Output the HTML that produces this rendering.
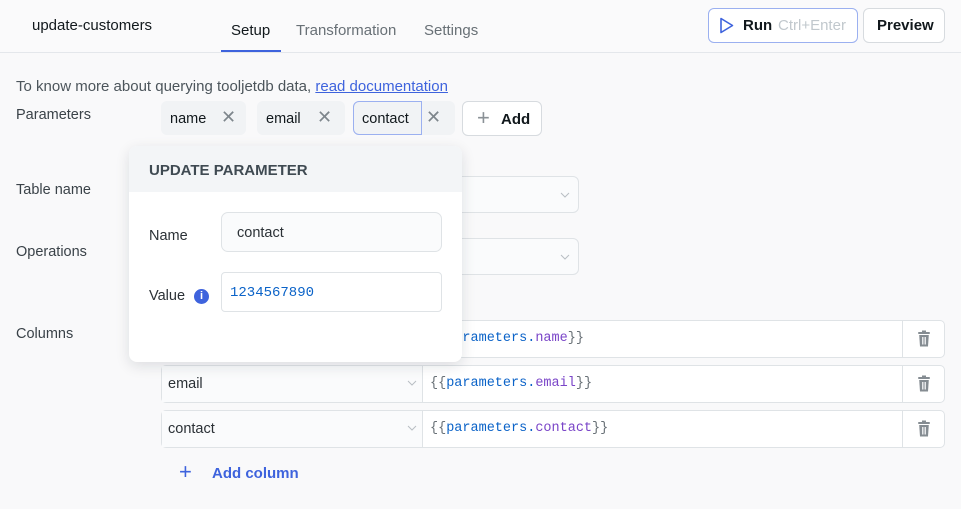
<!DOCTYPE html>
<html><head><style>
*{box-sizing:border-box;margin:0;padding:0}
body{width:961px;height:509px;background:#f9f9fa;font-family:"Liberation Sans",sans-serif;position:relative;overflow:hidden;color:#11181c}
.a{position:absolute}
.hdr{left:0;top:0;width:961px;height:53px;border-bottom:1px solid #e4e7eb;background:#fafafb}
.tab{font-size:15px;color:#687076;top:22px}
.btn{border:1px solid #d7dbdf;border-radius:6px;background:#fff}
.lbl{font-size:14.5px;color:#3a4248;left:16px}
.chip{top:101px;height:34px;background:#f1f3f5;border-radius:6px;font-size:14.5px}
.x{color:#7e868c;font-size:18px}
.sel{border:1px solid #dfe3e6;border-radius:6px;background:#fafbfc}
.row{left:161px;width:784px;height:38px;border:1px solid #dfe3e6;border-radius:5px;background:#fff}
.row .l{position:absolute;left:0;top:0;width:261px;height:36px;background:#fafbfc;border-right:1px solid #dfe3e6;font-size:14.5px;padding:10px 6px;color:#2b3136}
.row .v{position:absolute;left:268px;top:10px;font-family:"Liberation Mono",monospace;font-size:13.5px;color:#0b63c8}
.row .v b{font-weight:normal;color:#7a45c8}
.row .v i{font-style:normal;color:#687076}
.row .t{position:absolute;right:0;top:0;width:42px;height:36px;border-left:1px solid #dfe3e6}
.row .c{position:absolute;left:245px;top:14px}
</style></head><body>
<div class="a hdr"></div>
<div class="a" style="left:32px;top:17px;font-size:15px;color:#11181c">update-customers</div>
<div class="a tab" style="left:231px;color:#11181c">Setup</div>
<div class="a" style="left:221px;top:50px;width:60px;height:2px;background:#3e63dd"></div>
<div class="a tab" style="left:296px">Transformation</div>
<div class="a tab" style="left:424px">Settings</div>
<div class="a btn" style="left:708px;top:8px;width:150px;height:35px;border-color:#9bb0f0"></div>
<svg class="a" style="left:719px;top:17px" width="16" height="17" viewBox="0 0 16 17"><path d="M2 1.5 L13.5 8.5 L2 15.5 Z" fill="none" stroke="#3e63dd" stroke-width="1.6" stroke-linejoin="round"/></svg>
<div class="a" style="left:743px;top:17px;font-size:15px;font-weight:bold;color:#11181c">Run</div>
<div class="a" style="left:778px;top:17px;font-size:15px;color:#c1c8cd">Ctrl+Enter</div>
<div class="a btn" style="left:863px;top:8px;width:82px;height:35px"></div>
<div class="a" style="left:877px;top:17px;font-size:15px;font-weight:bold;color:#11181c">Preview</div>

<div class="a" style="left:16px;top:78px;font-size:15px;color:#4c555b">To know more about querying tooljetdb data, <span style="color:#3e63dd;text-decoration:underline">read documentation</span></div>
<div class="a lbl" style="top:107px">Parameters</div>
<div class="a chip" style="left:161px;width:85px"><span class="a" style="left:9px;top:10px">name</span><span class="a x" style="left:60px;top:6px">✕</span></div>
<div class="a chip" style="left:257px;width:88px"><span class="a" style="left:9px;top:10px">email</span><span class="a x" style="left:60px;top:6px">✕</span></div>
<div class="a chip" style="left:353px;width:102px"><div class="a" style="left:0;top:0;width:69px;height:34px;border:1px solid #9bb0f0;border-radius:6px 0 0 6px"></div><span class="a" style="left:9px;top:10px">contact</span><span class="a x" style="left:73px;top:6px">✕</span></div>
<div class="a btn" style="left:462px;top:101px;width:80px;height:35px"><span class="a" style="left:14px;top:3px;font-size:22px;color:#8a9196;font-weight:300">+</span><span class="a" style="left:38px;top:9px;font-size:15px;font-weight:bold">Add</span></div>

<div class="a lbl" style="top:182px">Table name</div>
<div class="a sel" style="left:300px;top:176px;width:279px;height:37px"><svg class="a" style="right:8px;top:15px" width="10" height="6"><path d="M1 1 L5 5 L9 1" fill="none" stroke="#b8bec3" stroke-width="1"/></svg></div>
<div class="a lbl" style="top:244px">Operations</div>
<div class="a sel" style="left:300px;top:238px;width:279px;height:37px"><svg class="a" style="right:8px;top:15px" width="10" height="6"><path d="M1 1 L5 5 L9 1" fill="none" stroke="#b8bec3" stroke-width="1"/></svg></div>
<div class="a lbl" style="top:326px">Columns</div>

<div class="a row" style="top:320px"><div class="l"></div><div class="v"><i>{{</i>parameters.<b>name</b><i>}}</i></div><div class="t"></div></div>
<div class="a row" style="top:365px"><div class="l">email<svg class="c" width="10" height="6"><path d="M1 1 L5 5 L9 1" fill="none" stroke="#b8bec3" stroke-width="1"/></svg></div><div class="v"><i>{{</i>parameters.<b>email</b><i>}}</i></div><div class="t"></div></div>
<div class="a row" style="top:410px"><div class="l">contact<svg class="c" width="10" height="6"><path d="M1 1 L5 5 L9 1" fill="none" stroke="#b8bec3" stroke-width="1"/></svg></div><div class="v"><i>{{</i>parameters.<b>contact</b><i>}}</i></div><div class="t"></div></div>
<svg class="a" style="left:917px;top:330px" width="14" height="17" viewBox="0 0 14 17"><rect x="1" y="2" width="12" height="2" rx="1" fill="#858c92"/><rect x="5" y="0.5" width="4" height="2" fill="#858c92"/><path d="M2.2 5 H11.8 L11 16.5 H3 Z" fill="#858c92"/><rect x="5.2" y="7" width="1.2" height="7.5" fill="#fff"/><rect x="7.6" y="7" width="1.2" height="7.5" fill="#fff"/></svg>
<svg class="a" style="left:917px;top:375px" width="14" height="17" viewBox="0 0 14 17"><rect x="1" y="2" width="12" height="2" rx="1" fill="#858c92"/><rect x="5" y="0.5" width="4" height="2" fill="#858c92"/><path d="M2.2 5 H11.8 L11 16.5 H3 Z" fill="#858c92"/><rect x="5.2" y="7" width="1.2" height="7.5" fill="#fff"/><rect x="7.6" y="7" width="1.2" height="7.5" fill="#fff"/></svg>
<svg class="a" style="left:917px;top:420px" width="14" height="17" viewBox="0 0 14 17"><rect x="1" y="2" width="12" height="2" rx="1" fill="#858c92"/><rect x="5" y="0.5" width="4" height="2" fill="#858c92"/><path d="M2.2 5 H11.8 L11 16.5 H3 Z" fill="#858c92"/><rect x="5.2" y="7" width="1.2" height="7.5" fill="#fff"/><rect x="7.6" y="7" width="1.2" height="7.5" fill="#fff"/></svg>
<div class="a" style="left:179px;top:459px;font-size:22px;color:#3e63dd">+</div>
<div class="a" style="left:212px;top:465px;font-size:15px;font-weight:bold;color:#3e63dd">Add column</div>

<div class="a" style="left:129px;top:146px;width:333px;height:216px;background:#fff;border-radius:8px;box-shadow:0 4px 14px rgba(16,24,40,.12);overflow:hidden">
 <div class="a" style="left:0;top:0;width:333px;height:46px;background:#f3f5f7"></div>
 <div class="a" style="left:20px;top:16px;font-size:15px;font-weight:bold;color:#3f4a52">UPDATE PARAMETER</div>
 <div class="a" style="left:20px;top:82px;font-size:14.5px;color:#2b3136">Name</div>
 <div class="a" style="left:92px;top:66px;width:221px;height:40px;border:1px solid #dfe3e6;border-radius:7px;background:#fafbfc"><span class="a" style="left:15px;top:12px;font-size:14.5px;color:#2b3136">contact</span></div>
 <div class="a" style="left:20px;top:142px;font-size:14.5px;color:#2b3136">Value</div>
 <div class="a" style="left:65px;top:143px;width:15px;height:15px;border-radius:50%;background:#3e63dd;color:#fff;font-size:11px;font-weight:bold;text-align:center;line-height:15px">i</div>
 <div class="a" style="left:92px;top:126px;width:221px;height:40px;border:1px solid #dfe3e6;border-radius:4px;background:#fff"><span class="a" style="left:8px;top:12px;font-family:'Liberation Mono',monospace;font-size:14px;color:#0b63c8">1234567890</span></div>
</div>
</body></html>
